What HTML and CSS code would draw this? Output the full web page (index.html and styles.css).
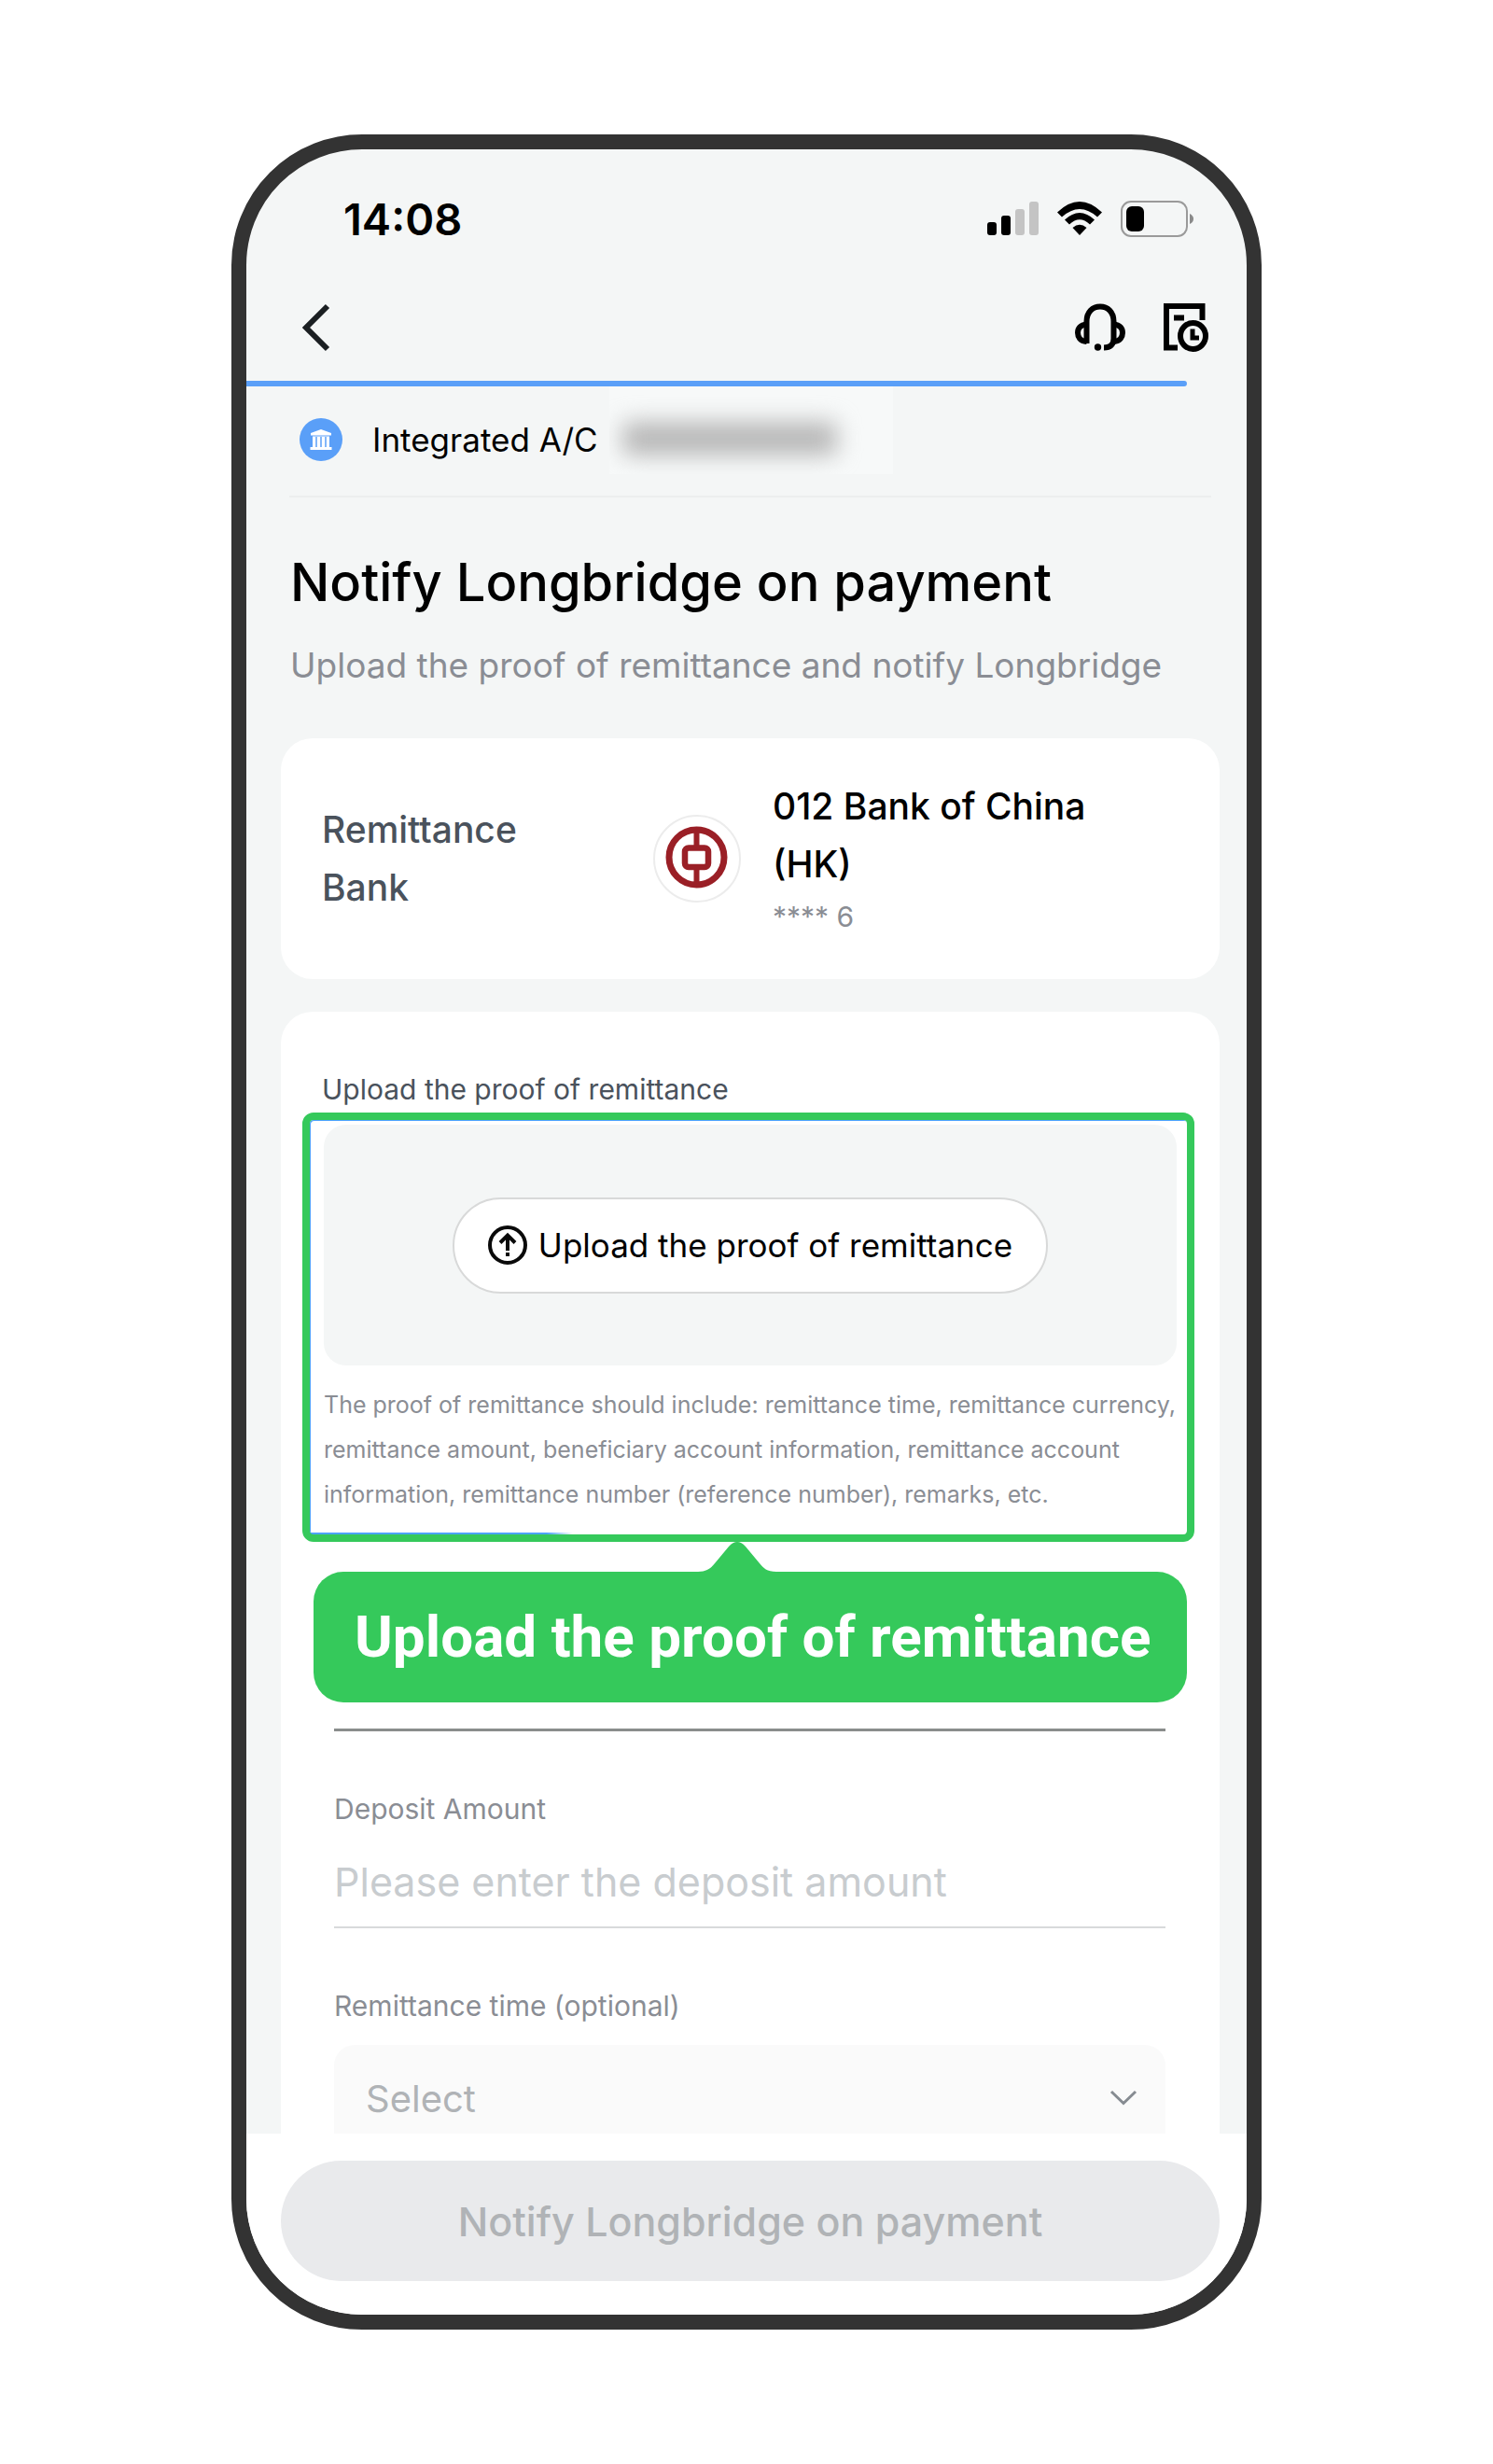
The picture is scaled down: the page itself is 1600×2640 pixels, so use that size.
FILE: index.html
```html
<!DOCTYPE html>
<html lang="en">
<head>
  <meta charset="UTF-8">
  <meta name="viewport" content="width=device-width, initial-scale=1.0">
  <title>Notify Longbridge on payment</title>
  <link rel="stylesheet" href="styles.css">
</head>
<body>
  <div class="phone">
    <div class="status-bar">
      <span class="time">14:08</span>
      <div class="status-icons">
        <svg class="signal" width="55" height="36" viewBox="0 0 55 36">
          <rect x="0" y="22" width="10" height="14" rx="3"/>
          <rect x="15" y="15" width="10" height="21" rx="3"/>
          <rect x="30" y="8" width="10" height="28" rx="3" fill="#c4c4c4"/>
          <rect x="45" y="0" width="10" height="36" rx="3" fill="#c4c4c4"/>
        </svg>
        <svg class="wifi" width="48" height="36" viewBox="0 0 48 36">
          <path d="M0 11.500Q24 -11.500 48 11.500L43 16.500Q24 -0.500 5 16.500Z"/>
          <path d="M8 19.500Q24 4.500 40 19.500L35 24.500Q24 14 13 24.500Z"/>
          <path d="M16.500 28Q24 21.500 31.500 28L24 36Z"/>
        </svg>
        <svg class="battery" width="79" height="39" viewBox="0 0 79 39">
          <rect x="1" y="1" width="70" height="37" rx="10" fill="none" stroke="#9a9a9a" stroke-width="2"/>
          <rect x="6" y="6" width="19" height="27" rx="6"/>
          <path d="M74 14Q78 16 78 19.500Q78 23 74 25Z" fill="#8a8a8a"/>
        </svg>
      </div>
    </div>

    <div class="nav">
      <button class="icon-btn" aria-label="Back">
        <svg width="30" height="52" viewBox="0 0 30 52" fill="none" stroke="#1b1f22" stroke-width="6">
          <path d="M27 3L4 26L27 49"/>
        </svg>
      </button>
      <div class="nav-actions">
        <button class="icon-btn" aria-label="Customer service">
          <svg width="54" height="52" viewBox="0 0 54 52" fill="none" stroke="#000" stroke-width="6">
            <path d="M12.500 43V19.500C12.500 9 19 3.500 27 3.500S41.500 9 41.500 19.500V38C41.500 44 38 47.500 31 47.500"/>
            <path d="M12.500 22.500C5.500 23 3 27 3 31.500S5.500 40.500 12.500 41"/>
            <path d="M41.500 22.500C48.500 23 51 27 51 31.500S48.500 40.500 41.500 41"/>
            <circle cx="24.500" cy="47" r="3.700" fill="#000" stroke="none"/>
          </svg>
        </button>
        <button class="icon-btn" aria-label="Deposit records">
          <svg width="48" height="52" viewBox="0 0 48 52" fill="none" stroke="#000" stroke-width="6">
            <path d="M15 47.500H3V3H41.500V18"/>
            <path d="M11 15.500H22"/>
            <ellipse cx="31.500" cy="35" rx="13.500" ry="14"/>
            <path d="M31 27.500V37H38" stroke-width="5"/>
          </svg>
        </button>
      </div>
    </div>

    <div class="progress"><div class="progress-fill"></div></div>

    <div class="account">
      <svg class="account-icon" width="46" height="46" viewBox="0 0 46 46">
        <circle cx="23" cy="23" r="23" fill="#5a9ff8"/>
        <path fill="#fff" d="M23 12L34 16V18.500H12V16ZM14 19.500H32V31H34.500V34H11.500V31H14Z"/>
        <path stroke="#5a9ff8" stroke-width="1.500" d="M18 20V31M23 20V31M28 20V31"/>
      </svg>
      <span class="account-name">Integrated A/C</span>
      <span class="account-number"><span class="masked"></span></span>
    </div>

    <header class="intro">
      <h1>Notify Longbridge on payment</h1>
      <p>Upload the proof of remittance and notify Longbridge</p>
    </header>

    <section class="card bank">
      <div class="bank-label">Remittance Bank</div>
      <svg class="bank-logo" width="94" height="94" viewBox="0 0 94 94" fill="none">
        <circle cx="47" cy="47" r="46" fill="#fff" stroke="#ececec" stroke-width="2"/>
        <g stroke="#9a1f26">
          <circle cx="46.500" cy="45.500" r="29.500" stroke-width="7"/>
          <path stroke-width="6" d="M46.500 16V33M46.500 58V75"/>
          <rect x="34" y="35.500" width="25" height="20.500" rx="4" stroke-width="6.500"/>
        </g>
      </svg>
      <div class="bank-info">
        <div class="bank-name">012 Bank of China (HK)</div>
        <div class="bank-no">**** 6</div>
      </div>
    </section>

    <section class="card form">
      <div class="upload-label">Upload the proof of remittance</div>
      <div class="highlight">
        <div class="upload-area">
          <button class="upload-btn">
            <svg width="42" height="42" viewBox="0 0 42 42" fill="none" stroke="#0a0a0a" stroke-width="4">
              <circle cx="21" cy="21" r="19"/>
              <path d="M21 11V27M13 18.500L21 10.500L29 18.500"/>
              <path d="M21 29V33"/>
            </svg>
            Upload the proof of remittance
          </button>
        </div>
        <p class="hint">The proof of remittance should include: remittance time, remittance currency, remittance amount, beneficiary account information, remittance account information, remittance number (reference number), remarks, etc.</p>
      </div>

      <div class="callout">
        <svg class="callout-tip" width="84" height="33" viewBox="0 0 84 33">
          <path fill="#35c95b" d="M0 33V32C10 32 14 28 18 23L33 5Q42 -5 51 5L66 23C70 28 74 32 84 32V33Z"/>
        </svg>
        Upload the proof of remittance
      </div>

      <div class="fields">
        <div class="field-line"></div>
        <label for="amount">Deposit Amount</label>
        <input type="text" id="amount" placeholder="Please enter the deposit amount">
        <label for="time">Remittance time (optional)</label>
        <div class="select-wrap">
          <select id="time">
            <option>Select</option>
          </select>
          <svg class="chevron" width="30" height="18" viewBox="0 0 30 18" fill="none" stroke="#868b91" stroke-width="3">
            <path d="M2 2L15 14.500L28 2"/>
          </svg>
        </div>
      </div>
    </section>

    <footer class="footer">
      <button class="submit-btn" disabled>Notify Longbridge on payment</button>
    </footer>
  </div>
</body>
</html>
```
FILE: styles.css
```css
* {
  box-sizing: border-box;
}
body {
  margin: 0;
  padding: 144px 24px;
  background-color: #fff;
  font-family: Inter, "Liberation Sans", sans-serif;
  color: #000;
}
button, input, select {
  font-family: inherit;
}
.phone {
  max-width: 1104px;
  margin: 0 auto;
  border: 16px solid #333;
  border-radius: 140px;
  background-color: #f4f6f6;
  overflow: hidden;
}

/* status bar and navigation */
.status-bar {
  display: flex;
  justify-content: space-between;
  align-items: center;
  height: 148px;
  padding: 0 56px 0 104px;
}
.time {
  font-size: 47px;
  font-weight: 600;
}
.status-icons {
  display: flex;
  align-items: center;
  gap: 20px;
}
.nav {
  display: flex;
  justify-content: space-between;
  align-items: center;
  height: 86px;
  padding: 0 41px 0 60px;
}
.nav-actions {
  display: flex;
  gap: 41px;
}
.icon-btn {
  display: flex;
  padding: 0;
  border: none;
  background: none;
  cursor: pointer;
}
.progress {
  margin-top: 14px;
}
.progress-fill {
  width: 94%;
  height: 6px;
  background-color: #5a9ff8;
  border-radius: 0 4px 4px 0;
}

/* account */
.account {
  display: flex;
  align-items: center;
  height: 119px;
  margin: 0 38px 0 46px;
  padding: 0 0 4px 11px;
  border-bottom: 2px solid #eceeee;
}
.account-name {
  margin-left: 32px;
  font-size: 35px;
}
.account-number {
  align-self: flex-start;
  flex: 0 1 304px;
  height: 94px;
  margin-left: 12px;
  padding: 38px 60px 0 14px;
  background-color: #f7f9f9;
  overflow: hidden;
}
.masked {
  display: block;
  height: 36px;
  border-radius: 8px;
  background-color: #b8b8b8;
  filter: blur(12px);
}

.intro {
  padding: 51px 47px 53px;
}
h1 {
  margin: 0 0 24px;
  font-size: 56px;
  font-weight: 500;
  line-height: 80px;
}
.intro p {
  margin: 0;
  font-size: 37px;
  line-height: 50px;
  color: #8a8d94;
}

.card {
  margin: 0 29px 0 37px;
  background-color: #fff;
  border-radius: 34px;
}

/* remittance bank */
.bank {
  display: flex;
  align-items: center;
  padding: 42px 44px;
}
.bank-label {
  flex: 0 0 355px;
  padding-right: 100px;
  font-size: 39px;
  font-weight: 500;
  line-height: 62px;
  color: #4a525c;
}
.bank-logo {
  flex: none;
}
.bank-info {
  max-width: 400px;
  margin-left: 34px;
}
.bank-name {
  font-size: 39px;
  font-weight: 500;
  line-height: 62px;
}
.bank-no {
  font-size: 30px;
  line-height: 50px;
  color: #8a8d94;
}

/* upload */
.form {
  margin-top: 35px;
  padding: 63px 0 20px;
  border-radius: 34px 34px 0 0;
}
.upload-label {
  margin: 0 44px 5px;
  font-size: 30px;
  line-height: 40px;
  color: #4a525c;
}
.highlight {
  margin: 0 27px 0 23px;
  padding: 5px 11px 19px 15px;
  border: 8px solid #35c95b;
  border-radius: 12px;
  background: linear-gradient(to right, #4da3ff 90%, transparent) left bottom / 30% 2px no-repeat;
  box-shadow: inset 1px 1px 0 #4da3ff;
}
.upload-area {
  display: flex;
  justify-content: center;
  align-items: center;
  height: 258px;
  border-radius: 24px;
  background-color: #f4f6f6;
}
.upload-btn {
  display: flex;
  align-items: center;
  gap: 12px;
  height: 103px;
  padding: 0 36px;
  border: 2px solid #d8d9d9;
  border-radius: 52px;
  background-color: #fff;
  font-size: 35px;
  color: #000;
  cursor: pointer;
}
.hint {
  margin: 18px 0 0;
  font-size: 25px;
  line-height: 48px;
  color: #8a8d94;
}
.callout {
  position: relative;
  margin: 32px 35px 0;
  padding-left: 44px;
  border-radius: 32px;
  background-color: #35c95b;
  font-family: Roboto, "Liberation Sans", sans-serif;
  font-size: 62px;
  font-weight: 700;
  line-height: 140px;
  color: #fff;
}
.callout-tip {
  position: absolute;
  top: -32px;
  left: 44%;
}

/* fields */
.fields {
  display: flex;
  flex-direction: column;
  padding: 28px 58px 0 57px;
}
.field-line {
  height: 3px;
  background-color: #8a8d8c;
}
.fields label {
  margin-top: 63px;
  font-size: 30px;
  line-height: 40px;
  color: #8a8d94;
}
.fields input {
  height: 98px;
  margin-top: 10px;
  padding: 0;
  border: none;
  border-bottom: 2px solid #d8dadb;
  font-size: 43px;
  outline: none;
}
.fields input::placeholder {
  color: #c8cccf;
}
.select-wrap {
  position: relative;
  margin-top: 22px;
}
select {
  display: block;
  width: 100%;
  height: 114px;
  padding: 0 34px;
  border: none;
  border-radius: 22px;
  background-color: #fafafa;
  font-size: 40px;
  color: #b0b3b6;
  appearance: none;
}
.chevron {
  position: absolute;
  top: 48px;
  right: 30px;
}

/* the footer covers the end of the scrolled form */
.footer {
  position: relative;
  margin-top: -39px;
  padding: 29px 29px 36px 37px;
  background-color: #fff;
}
.submit-btn {
  display: block;
  width: 100%;
  height: 129px;
  border: none;
  border-radius: 65px;
  background-color: #e9eaec;
  font-size: 43px;
  font-weight: 500;
  color: #b0b3b6;
}
```
